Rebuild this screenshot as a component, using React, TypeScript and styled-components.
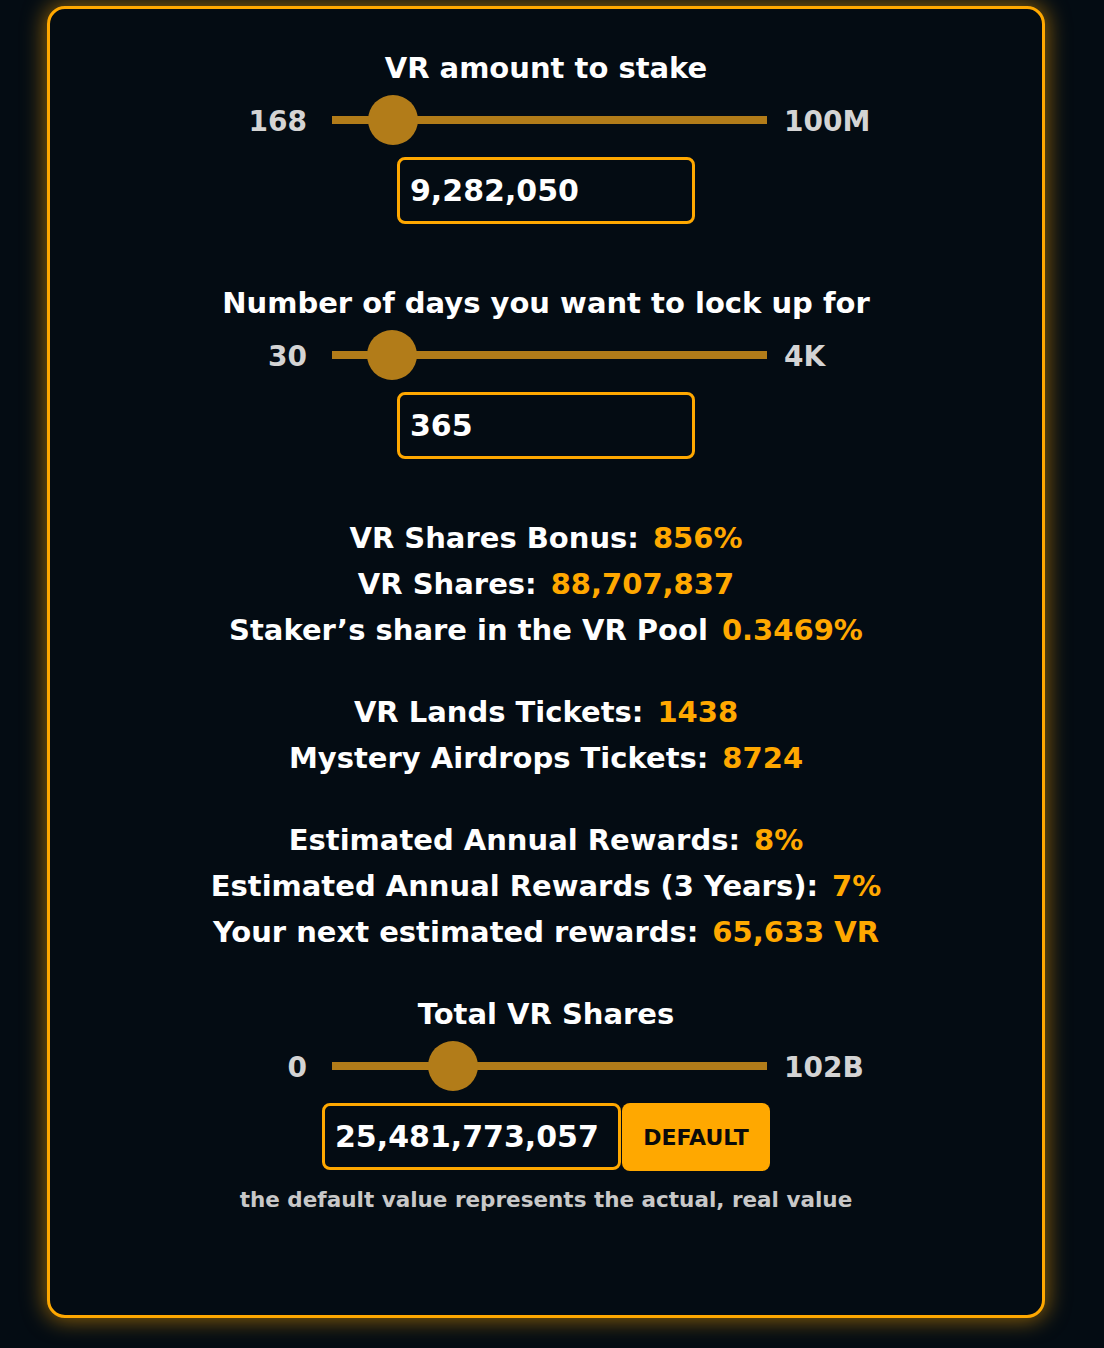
import styled, { createGlobalStyle } from 'styled-components'

const GlobalStyle = createGlobalStyle`
  html, body {
    margin: 0;
    padding: 0;
    background: #040c13;
  }
  body {
    font-family: 'DejaVu Sans', 'Open Sans', sans-serif;
    color: #ffffff;
  }
`

const Page = styled.div`
  padding: 6px 0 30px 47px;
`

const Card = styled.section`
  box-sizing: border-box;
  width: 998px;
  height: 1312px;
  border: 3px solid #ffa800;
  border-radius: 18px;
  background: #040c13;
  box-shadow: 0 0 22px 2px rgba(255, 168, 0, 0.55);
  padding: 41px 0 0;
  display: flex;
  flex-direction: column;
  align-items: center;
`

const Title = styled.h2<{ $top?: number }>`
  margin: ${({ $top }) => $top ?? 0}px 0 0;
  font-size: 29px;
  line-height: 36px;
  font-weight: 700;
  text-align: center;
`

const SliderRow = styled.div`
  display: grid;
  grid-template-columns: 1fr 435px 1fr;
  align-items: center;
  width: 100%;
  height: 50px;
  margin-top: 9px;
  padding-left: 7px;
  box-sizing: border-box;
`

const RangeLabel = styled.span<{ $side: 'left' | 'right' }>`
  font-size: 28px;
  font-weight: 700;
  color: #d4d4d4;
  padding-top: 2px;
  justify-self: ${({ $side }) => ($side === 'left' ? 'end' : 'start')};
  margin: ${({ $side }) => ($side === 'left' ? '0 25px 0 0' : '0 0 0 17px')};
`

const Track = styled.div`
  position: relative;
  height: 8px;
  background: #b27c19;
`

const Thumb = styled.div`
  position: absolute;
  top: 50%;
  width: 50px;
  height: 50px;
  margin: -25px 0 0 -25px;
  border-radius: 50%;
  background: #b27c19;
`

const ValueBox = styled.input<{ $width: number }>`
  box-sizing: border-box;
  width: ${({ $width }) => $width}px;
  height: 67px;
  border: 3px solid #ffa800;
  border-radius: 8px;
  background: transparent;
  color: #ffffff;
  font-family: inherit;
  font-size: 30px;
  font-weight: 700;
  padding: 0 0 0 10px;
  outline: none;
`

const InputRow = styled.div`
  display: flex;
  align-items: stretch;
  gap: 1px;
  margin-top: 12px;
`

const DefaultButton = styled.button`
  width: 148px;
  height: 68px;
  border: none;
  border-radius: 8px;
  background: #ffa800;
  color: #0b0b0b;
  font-family: inherit;
  font-size: 22px;
  font-weight: 700;
  cursor: pointer;
`

const StatGroup = styled.div<{ $top: number }>`
  margin-top: ${({ $top }) => $top}px;
  display: flex;
  flex-direction: column;
  align-items: center;
`

const StatLine = styled.p`
  margin: 0;
  font-size: 29px;
  line-height: 46px;
  font-weight: 700;
  white-space: nowrap;
`

const StatValue = styled.span`
  color: #ffa800;
  margin-left: 14px;
`

const Footnote = styled.p`
  margin: 17px 0 0;
  font-size: 21.5px;
  line-height: 24px;
  font-weight: 700;
  color: #c8c8c8;
`

type SliderProps = {
  min: number
  max: number
  value: number
  minLabel: string
  maxLabel: string
}

function Slider({ min, max, value, minLabel, maxLabel }: SliderProps) {
  const ratio = (value - min) / (max - min)
  return (
    <SliderRow>
      <RangeLabel $side="left">{minLabel}</RangeLabel>
      <Track>
        <Thumb style={{ left: `calc(25px + (100% - 50px) * ${ratio})` }} />
      </Track>
      <RangeLabel $side="right">{maxLabel}</RangeLabel>
    </SliderRow>
  )
}

export default function App() {
  return (
    <Page>
      <GlobalStyle />
      <Card>
        <Title>VR amount to stake</Title>
        <Slider min={168} max={100000000} value={9282050} minLabel="168" maxLabel="100M" />
        <InputRow>
          <ValueBox $width={298} defaultValue="9,282,050" />
        </InputRow>

        <Title $top={61}>Number of days you want to lock up for</Title>
        <Slider min={30} max={4000} value={395} minLabel="30" maxLabel="4K" />
        <InputRow>
          <ValueBox $width={298} defaultValue="365" />
        </InputRow>

        <StatGroup $top={56}>
          <StatLine>VR Shares Bonus:<StatValue>856%</StatValue></StatLine>
          <StatLine>VR Shares:<StatValue>88,707,837</StatValue></StatLine>
          <StatLine>Staker’s share in the VR Pool<StatValue>0.3469%</StatValue></StatLine>
        </StatGroup>

        <StatGroup $top={36}>
          <StatLine>VR Lands Tickets:<StatValue>1438</StatValue></StatLine>
          <StatLine>Mystery Airdrops Tickets:<StatValue>8724</StatValue></StatLine>
        </StatGroup>

        <StatGroup $top={36}>
          <StatLine>Estimated Annual Rewards:<StatValue>8%</StatValue></StatLine>
          <StatLine>Estimated Annual Rewards (3 Years):<StatValue>7%</StatValue></StatLine>
          <StatLine>Your next estimated rewards:<StatValue>65,633 VR</StatValue></StatLine>
        </StatGroup>

        <Title $top={41}>Total VR Shares</Title>
        <Slider min={0} max={102000000000} value={25481773057} minLabel="0" maxLabel="102B" />
        <InputRow>
          <ValueBox $width={299} defaultValue="25,481,773,057" />
          <DefaultButton type="button">DEFAULT</DefaultButton>
        </InputRow>
        <Footnote>the default value represents the actual, real value</Footnote>
      </Card>
    </Page>
  )
}
